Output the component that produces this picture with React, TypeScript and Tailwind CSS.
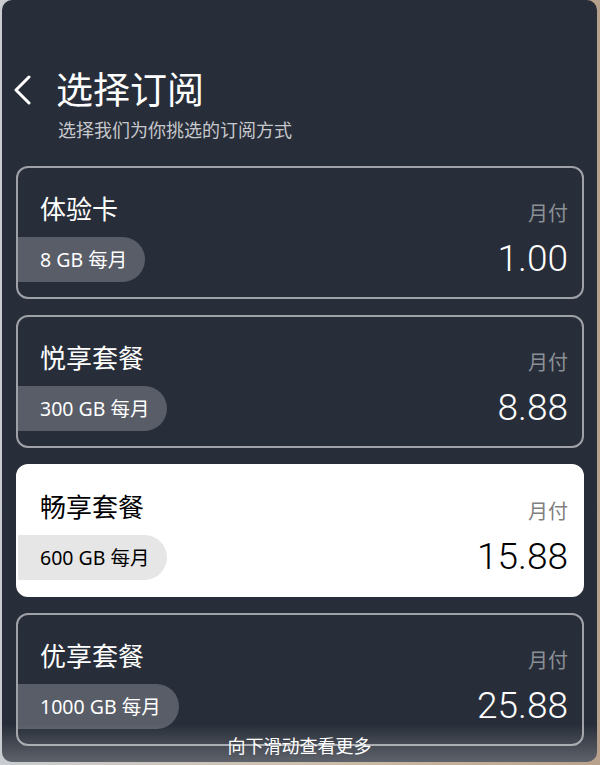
import React from 'react';

interface Plan {
  name: string;
  quota: string;
  price: string;
  selected?: boolean;
}

const plans: Plan[] = [
  { name: '体验卡', quota: '8 GB 每月', price: '1.00' },
  { name: '悦享套餐', quota: '300 GB 每月', price: '8.88' },
  { name: '畅享套餐', quota: '600 GB 每月', price: '15.88', selected: true },
  { name: '优享套餐', quota: '1000 GB 每月', price: '25.88' },
];

const cjk = "font-['Noto_Sans','Noto_Sans_CJK_SC',sans-serif]";

const PlanCard = ({ plan }: { plan: Plan }) => {
  const sel = plan.selected;
  return (
    <div
      className={`h-[133px] shrink-0 rounded-[12px] border-2 flex justify-between ${
        sel ? 'bg-white border-white text-black' : 'bg-[#282e39] border-[#9ea1a7] text-white'
      }`}
    >
      <div className="flex flex-col items-start">
        <div className={`mt-[24px] ml-[22px] text-[26px] leading-[34px] ${cjk}`}>{plan.name}</div>
        <div
          className={`mt-[11px] h-[45px] flex items-center pl-[22px] pr-[18px] rounded-r-full text-[19.5px] ${cjk} ${
            sel ? 'bg-[#e6e6e6]' : 'bg-[#585d68]'
          }`}
        >
          {plan.quota}
        </div>
      </div>
      <div className="flex flex-col items-end pr-[14px]">
        <div
          className={`mt-[32px] text-[20px] leading-[28px] ${cjk} ${sel ? 'text-[#7f7f7f]' : 'text-[#8b9097]'}`}
        >
          月付
        </div>
        <div className="mt-[9px] text-[37px] leading-[44px] font-light font-['Roboto',sans-serif]">
          {plan.price}
        </div>
      </div>
    </div>
  );
};

export default function App() {
  return (
    <div className="w-[600px] h-[765px] bg-gradient-to-r from-[#c9ccd0] via-[#cdbfae] to-[#b8a18c] overflow-hidden">
      <div className="relative ml-[2px] w-[595px] h-[762px] rounded-[10px] bg-[#282e39] overflow-hidden">
        <div className="pt-[68px]">
          <div className="flex items-center">
            <svg className="ml-[10px]" width="20" height="30" viewBox="0 0 20 30" fill="none">
              <polyline points="17,2 4,15 17,28" stroke="white" strokeWidth="3" strokeLinecap="round" strokeLinejoin="round" />
            </svg>
            <h1 className={`ml-[24px] text-[37px] leading-[44px] text-white ${cjk}`}>选择订阅</h1>
          </div>
          <p className={`mt-[6px] ml-[56px] text-[18px] leading-[24px] text-[#c5c8cc] ${cjk}`}>
            选择我们为你挑选的订阅方式
          </p>
        </div>

        <div className="mt-[24px] ml-[14px] mr-[13px] flex flex-col gap-[16px]">
          {plans.map((p) => (
            <PlanCard key={p.name} plan={p} />
          ))}
        </div>

        <div className="absolute left-0 right-0 bottom-0 h-[38px] bg-gradient-to-b from-transparent to-white/25" />
        <div className={`absolute left-0 right-0 bottom-[4px] text-center text-[18px] leading-[24px] text-white ${cjk}`}>
          向下滑动查看更多
        </div>
      </div>
    </div>
  );
}
